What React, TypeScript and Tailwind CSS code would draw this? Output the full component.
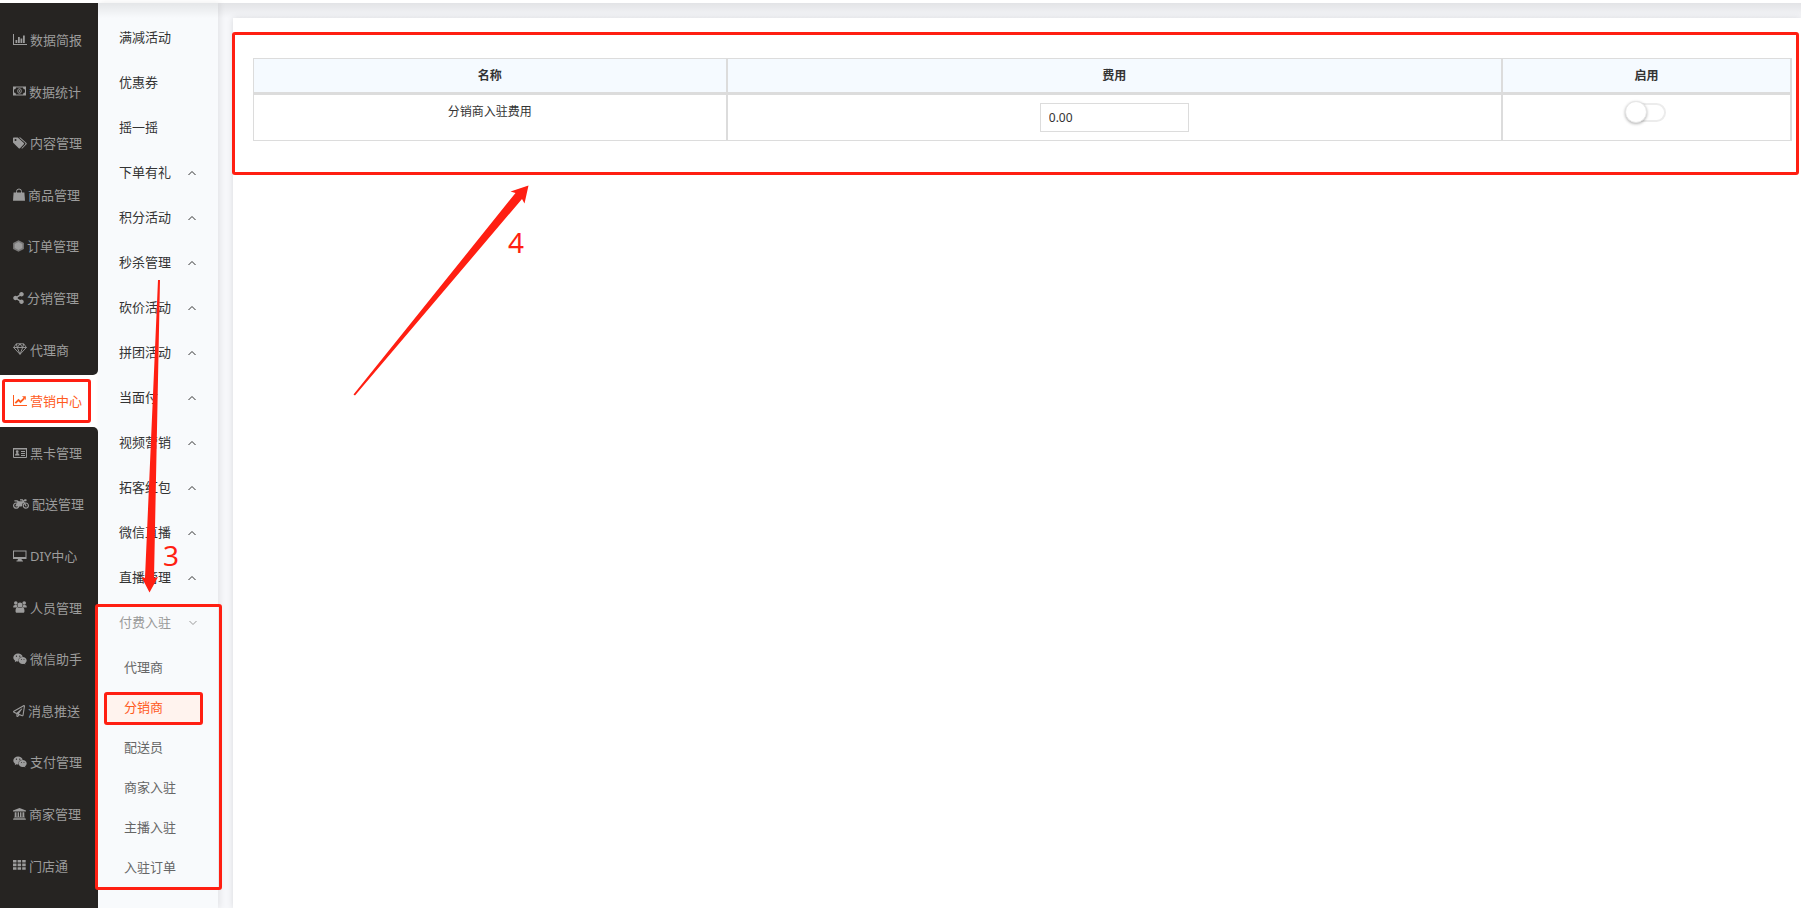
import { useState } from 'react'
import type { ReactNode } from 'react'
import clsx from 'clsx'
import { FaMotorcycle, FaRegPaperPlane, FaShareAlt, FaWeixin } from 'react-icons/fa'

const BarChartIcon = () => (
  <svg viewBox="0 0 14 12" className="h-3 w-3.5" fill="currentColor">
    <path d="M0 0h1v10h13v1H0zM2.500 6h1.800v3H2.500zM5 3h1.800v6H5zM7.500 4.500h1.800V9H7.500zM10 1.500h1.800V9H10z" />
  </svg>
)

const MoneyIcon = () => (
  <svg viewBox="0 0 13 12" className="h-3 w-[13px]" fill="currentColor">
    <path fillRule="evenodd" d="M0 1.500h13v9H0zM3 2.500A2 2 0 0 1 1 4.500v3a2 2 0 0 1 2 2h7a2 2 0 0 1 2-2v-3a2 2 0 0 1-2-2z" />
    <ellipse cx="6.500" cy="6" rx="1.800" ry="2.400" fill="none" stroke="currentColor" strokeWidth="0.9" />
    <path d="M6.100 4.800h.8v2.400h-.8z" />
  </svg>
)

const TagsIcon = () => (
  <svg viewBox="0 0 14 12" className="h-3 w-3.5" fill="currentColor">
    <path
      fillRule="evenodd"
      d="M0 1.300C0 .8.300.5.800.5h4l6 5.500c.4.400.4.900 0 1.300L7 11.200c-.4.400-.9.400-1.300 0L0 5.500zM2.500 2a1 1 0 1 0 0 2 1 1 0 0 0 0-2z"
    />
    <path d="M5.900.5h1.500L13.500 6c.4.400.4.900 0 1.300l-3.900 3.900c-.4.400-.8.400-1.200.1l3.700-3.700c.5-.6.500-1.200-.1-1.800z" />
  </svg>
)

const BagIcon = () => (
  <svg viewBox="0 0 12 13" className="h-[13px] w-3" fill="currentColor">
    <path d="M.6 4.500h10.800l.6 8.200H0z" />
    <path d="M3.500 6V3.500a2.500 2.500 0 0 1 5 0V6" fill="none" stroke="currentColor" />
  </svg>
)

const HexagonIcon = () => (
  <svg viewBox="0 0 11 12" className="h-3 w-[11px]" fill="currentColor">
    <path d="M5.500.2 10.900 3.100v5.800L5.500 11.800.1 8.900V3.100z" opacity="0.7" />
    <path d="M5.500 2 9.300 4v4L5.500 10 1.700 8V4z" />
  </svg>
)

const GemIcon = () => (
  <svg viewBox="0 0 14 12" className="h-3 w-3.5" fill="none" stroke="currentColor" strokeWidth="0.9" strokeLinejoin="round">
    <path d="M3.300.8h7.400l2.700 3.700L7 11.300.6 4.500zM.6 4.500h12.800M3.300.8l1 3.700L7 11.300l2.700-6.800 1-3.700M4.300 4.500 7 .8l2.700 3.700" />
  </svg>
)

const LineChartIcon = () => (
  <svg viewBox="0 0 14 12" className="h-3 w-3.5" fill="currentColor">
    <path d="M0 0h1v10h13v1H0z" />
    <path d="M2.300 8.200 5.500 5l2 2 3.700-3.700" fill="none" stroke="currentColor" strokeWidth="1.800" />
    <path d="M9 1.300h3.800v3.800z" />
  </svg>
)

const IdCardIcon = () => (
  <svg viewBox="0 0 14 12" className="h-3 w-3.5" fill="currentColor">
    <path d="M.5 1.500h13v9H.5z" fill="none" stroke="currentColor" />
    <circle cx="4.200" cy="4.700" r="1.400" />
    <path d="M2 8.500c0-3.500 4.500-3.500 4.500 0zM8 4h4v1H8zM8 6h4v1H8zM8 8h4v1H8zM0 1h14v1.500H0z" />
  </svg>
)

const DesktopIcon = () => (
  <svg viewBox="0 0 14 12" className="h-3 w-3.5" fill="currentColor">
    <path fillRule="evenodd" d="M0 .5h13.500V9H0zM1 1.500V7h11.500V1.500zM5 9h3.500l.5 1.500h1v1H3.500v-1h1z" />
  </svg>
)

const GroupIcon = () => (
  <svg viewBox="0 0 14 12" className="h-3 w-3.5" fill="currentColor">
    <circle cx="2.800" cy="2" r="1.800" />
    <circle cx="11.200" cy="2" r="1.800" />
    <circle cx="7" cy="4" r="2.500" />
    <path d="M.3 6.500C0 4 1.500 3.600 4 4.200c.1 1 .4 1.600.9 2.300zM13.700 6.500c.3-2.500-1.200-2.900-3.700-2.300-.1 1-.4 1.600-.9 2.300z" />
    <path d="M2.500 10C2.500 7.500 3.200 6.400 4.800 6.200c1.400 1 3 1 4.400 0 1.600.2 2.300 1.300 2.300 3.800 0 1.300-.6 1.800-1.500 1.800H4c-.9 0-1.500-.5-1.500-1.800z" />
  </svg>
)

const BankIcon = () => (
  <svg viewBox="0 0 13 12" className="h-3 w-[13px]" fill="currentColor">
    <path d="M6.500 0 13 2.600v1H0v-1zM1.700 4.200h1.800v4.600h1.100V4.200h1.400v4.600h1V4.200h1.400v4.600h1.100V4.200h1.800v4.600h.5v.8H1.200v-.8h.5zM.6 10.200h11.800l.6 1.600H0z" />
  </svg>
)

const GridIcon = () => (
  <svg viewBox="0 0 13 12" className="h-3 w-[13px]" fill="currentColor">
    <path d="M0 1h3.500v2.600H0zM4.600 1h3.500v2.600H4.600zM9.200 1h3.500v2.600H9.200zM0 4.600h3.500v2.600H0zM4.600 4.600h3.500v2.600H4.600zM9.200 4.600h3.500v2.600H9.200zM0 8.200h3.500v2.600H0zM4.600 8.200h3.500v2.600H4.600zM9.200 8.200h3.500v2.600H9.200z" />
  </svg>
)

type MainItem = { label: string; icon: ReactNode }

const mainMenu: MainItem[] = [
  { label: '数据简报', icon: <BarChartIcon /> },
  { label: '数据统计', icon: <MoneyIcon /> },
  { label: '内容管理', icon: <TagsIcon /> },
  { label: '商品管理', icon: <BagIcon /> },
  { label: '订单管理', icon: <HexagonIcon /> },
  { label: '分销管理', icon: <FaShareAlt className="h-3 w-[11px]" /> },
  { label: '代理商', icon: <GemIcon /> },
  { label: '营销中心', icon: <LineChartIcon /> },
  { label: '黑卡管理', icon: <IdCardIcon /> },
  { label: '配送管理', icon: <FaMotorcycle className="h-4 w-4" /> },
  { label: 'DIY中心', icon: <DesktopIcon /> },
  { label: '人员管理', icon: <GroupIcon /> },
  { label: '微信助手', icon: <FaWeixin className="h-3.5 w-3.5" /> },
  { label: '消息推送', icon: <FaRegPaperPlane className="h-3 w-3" /> },
  { label: '支付管理', icon: <FaWeixin className="h-3.5 w-3.5" /> },
  { label: '商家管理', icon: <BankIcon /> },
  { label: '门店通', icon: <GridIcon /> },
]
const activeMain = 7

const plainItems = ['满减活动', '优惠券', '摇一摇']
const groups = [
  '下单有礼',
  '积分活动',
  '秒杀管理',
  '砍价活动',
  '拼团活动',
  '当面付',
  '视频营销',
  '拓客红包',
  '微信直播',
  '直播管理',
]
const feeItems = ['代理商', '分销商', '配送员', '商家入驻', '主播入驻', '入驻订单']

function Chevron({ down = false }: { down?: boolean }) {
  return (
    <svg viewBox="0 0 8 6" className="h-1.5 w-2" fill="none" stroke="currentColor">
      <path d={down ? 'M.5 1 4 4.500 7.500 1' : 'M.5 5 4 1.500 7.500 5'} />
    </svg>
  )
}

function Sidebar() {
  return (
    <nav className="flex w-[98px] shrink-0 flex-col bg-white text-[13px] text-[#9c9c9c]">
      <div className="h-[11px] bg-[#262422]" />
      {mainMenu.map((item, i) => (
        <a
          key={item.label}
          href="#"
          className={clsx(
            'flex flex-1 items-center gap-[3px] pt-0.5 pl-[13px] whitespace-nowrap',
            i === activeMain ? 'bg-white text-[#ff5b1e]' : 'bg-[#262422]',
            i === activeMain - 1 && 'rounded-br-[5px]',
            i === activeMain + 1 && 'rounded-tr-[5px]',
          )}
        >
          <span className="shrink-0 pb-0.5">{item.icon}</span>
          {item.label}
        </a>
      ))}
      <div className="h-[17px] bg-[#262422]" />
    </nav>
  )
}

function SubMenu() {
  return (
    <nav className="w-[120px] shrink-0 bg-[#f8fafc] pt-3 text-[13px] text-[#333] shadow-[2px_0_6px_rgba(0,0,0,0.08)]">
      {plainItems.map((label) => (
        <a key={label} href="#" className="flex h-[45px] items-center pl-[21px]">
          {label}
        </a>
      ))}
      {groups.map((label) => (
        <button key={label} type="button" className="flex h-[45px] w-full items-center justify-between pr-[22px] pl-[21px]">
          {label}
          <Chevron />
        </button>
      ))}
      <button type="button" className="flex h-[45px] w-full items-center justify-between pr-[21px] pl-[21px] text-[#999]">
        付费入驻
        <Chevron down />
      </button>
      <div className="flex flex-col gap-2.5 py-2 pr-4 pl-2 text-[#666]">
        {feeItems.map((label) => (
          <a
            key={label}
            href="#"
            className={clsx(
              'flex h-[30px] items-center pl-[18px]',
              label === '分销商' && 'bg-[#fff3ee] text-[#ff5b1e]',
            )}
          >
            {label}
          </a>
        ))}
      </div>
    </nav>
  )
}

function FeeTable() {
  const [fee, setFee] = useState('0.00')
  const [enabled, setEnabled] = useState(false)

  return (
    <table className="w-full table-fixed border-separate border-spacing-0 border-t border-l border-[#dcdcdc] text-xs text-[#333]">
      <thead>
        <tr className="bg-[#f5faff]">
          <th className="h-9 w-[30.8%] border-r-2 border-b-3 border-[#dcdcdc] font-bold">名称</th>
          <th className="border-r-2 border-b-3 border-[#dcdcdc] font-bold">费用</th>
          <th className="w-[18.8%] border-r-2 border-b-3 border-[#dcdcdc] font-bold">启用</th>
        </tr>
      </thead>
      <tbody>
        <tr className="text-center align-top">
          <td id="fee-name" className="border-r-2 border-b border-[#dcdcdc] py-2 leading-[18px]">
            分销商入驻费用
          </td>
          <td className="border-r-2 border-b border-[#dcdcdc] py-2">
            <input
              type="text"
              aria-labelledby="fee-name"
              value={fee}
              onChange={(e) => setFee(e.target.value)}
              className="mx-auto block h-[29px] w-[149px] border border-[#dcdcdc] px-2 outline-none"
            />
          </td>
          <td className="border-r-2 border-b border-[#dcdcdc] py-2">
            <label className="relative mx-auto block h-[19px] w-10 rounded-full border-2 border-[#ececec]">
              <input
                type="checkbox"
                aria-label="启用"
                checked={enabled}
                onChange={(e) => setEnabled(e.target.checked)}
                className="peer sr-only"
              />
              <span className="absolute -top-1 -left-[3px] size-[22px] rounded-full border border-[#e6e6e6] bg-white shadow-[0_1px_3px_rgba(0,0,0,0.3)] peer-checked:left-4" />
            </label>
          </td>
        </tr>
      </tbody>
    </table>
  )
}

// Guide marks drawn over the page: frames, arrows and step numbers.
function Annotations() {
  return (
    <div className="pointer-events-none absolute inset-0 text-[28px] leading-none text-[#ff1f12]">
      <div className="absolute top-[379px] left-0.5 h-11 w-[89px] rounded-[3px] border-3 border-current" />
      <div className="absolute top-[604px] left-[95px] h-[286px] w-[127px] rounded-[3px] border-3 border-current" />
      <div className="absolute top-[692px] left-[104px] h-[33px] w-[99px] rounded-[3px] border-3 border-current" />
      <div className="absolute top-8 right-0.5 left-[232px] h-[143px] rounded-[3px] border-3 border-current" />
      <svg className="absolute top-0 left-0 h-[600px] w-[560px]" viewBox="0 0 560 600" fill="currentColor">
        <path d="M158 280h2L154 578l4-1-8.500 15.500L141.500 577l3.500 1z" />
        <path d="M353.500 394.500 515.500 193l-5-1.500 18-6-4 18-2.500-4.500L355 395.500z" />
      </svg>
      <span className="absolute top-[541px] left-[163px]">3</span>
      <span className="absolute top-[228px] left-[508px]">4</span>
    </div>
  )
}

export default function App() {
  return (
    <div className="relative flex min-h-screen flex-col bg-white pt-[3px] font-['Noto_Sans','Noto_Sans_CJK_SC',sans-serif]">
      <div className="flex flex-1 bg-[#f6f7fa]">
        <Sidebar />
        <div className="relative flex min-w-0 flex-1">
          <SubMenu />
          <main className="flex min-w-0 flex-1 pt-[15px] pl-[15px]">
            <section className="min-w-0 flex-1 bg-white pt-10 pr-[9px] pl-5 shadow-[0_0_6px_rgba(0,0,0,0.12)]">
              <FeeTable />
            </section>
          </main>
          {/* Shade cast by the page header */}
          <div className="pointer-events-none absolute inset-x-0 top-0 h-[15px] bg-linear-to-b from-black/8 to-transparent" />
        </div>
      </div>
      <Annotations />
    </div>
  )
}
